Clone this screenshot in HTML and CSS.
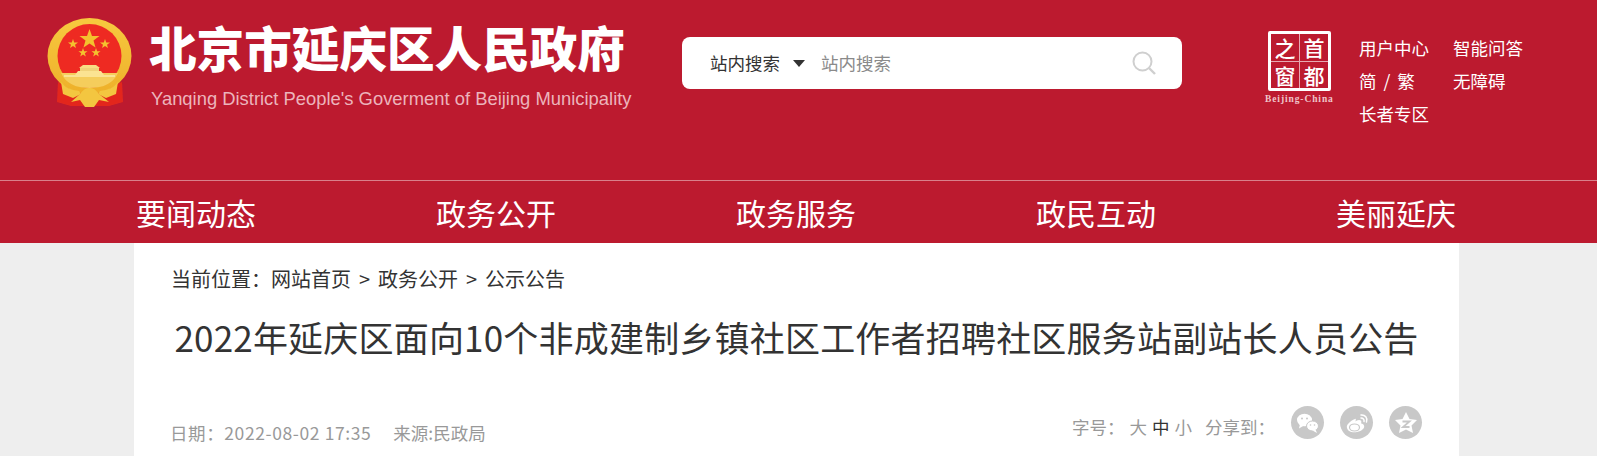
FILE: index.html
```html
<!DOCTYPE html>
<html lang="zh-CN">
<head>
  <meta charset="UTF-8" />
  <title>2022年延庆区面向10个非成建制乡镇社区工作者招聘社区服务站副站长人员公告</title>
  <link rel="stylesheet" href="styles.css">
</head>
<body>
  <header class="top">
    <svg class="emblem" viewBox="0 0 86 90" width="86" height="90">
      <defs>
        <linearGradient id="ring" x1="0" y1="0" x2="0" y2="1">
          <stop offset="0" stop-color="#f7c93f"/>
          <stop offset="1" stop-color="#eeb02a"/>
        </linearGradient>
        <filter id="soft"><feGaussianBlur stdDeviation=".35"/></filter>
      </defs>
      <g filter="url(#soft)">
        <path d="M11 64 L10 84 L24 88 L62 88 L76 84 L75 64 L43 78 Z" fill="#e3281d"/>
        <ellipse cx="42.500" cy="38" rx="42" ry="38" fill="url(#ring)"/>
        <circle cx="42.500" cy="38" r="32" fill="#ee2c24"/>
        <path d="M14 55 H71 Q64 70 42.500 70 Q21 70 14 55 Z" fill="#f5cd5c"/>
        <rect x="17" y="57" width="51" height="2" fill="#fbe392"/>
        <path d="M28 57 L31 53 H54 L57 57 Z" fill="#fbe392"/>
        <rect x="33" y="50" width="19" height="3" fill="#f0d27a"/>
        <path d="M32 50 L36 47 H49 L53 50 Z" fill="#f9dd83"/>
        <path d="M24 84 L33 76 Q38 69 42.500 70 Q47 69 52 76 L62 84 L52 82 L47 89 H38 L33 82 Z" fill="#f3c640"/>
        <path d="M14 64 Q20 72 32 73 L34 76 L26 80 L16 76 Z M71 64 Q65 72 53 73 L51 76 L59 80 L69 76 Z" fill="#f3c640"/>
        <polygon points="42.500,11 45,18 52.500,18 46.500,22.500 48.500,29.500 42.500,25.500 36.500,29.500 38.500,22.500 32.500,18 40,18" fill="#f4c22f"/>
        <polygon points="26,21 27.200,24.500 31,24.500 28,26.800 29,30 26,28 23,30 24,26.800 21,24.500 24.800,24.500" fill="#f4c22f"/>
        <polygon points="58,21 59.200,24.500 63,24.500 60,26.800 61,30 58,28 55,30 56,26.800 53,24.500 56.800,24.500" fill="#f4c22f"/>
        <polygon points="36,30 37.100,33.300 40.500,33.300 37.800,35.300 38.800,38.500 36,36.600 33.200,38.500 34.200,35.300 31.500,33.300 34.900,33.300" fill="#f4c22f"/>
        <polygon points="49,30 50.100,33.300 53.500,33.300 50.800,35.300 51.800,38.500 49,36.600 46.200,38.500 47.200,35.300 44.500,33.300 47.900,33.300" fill="#f4c22f"/>
      </g>
    </svg>
    <div class="brand">
      <div class="brand-cn">北京市延庆区人民政府</div>
      <div class="brand-en">Yanqing District People's Goverment of Beijing Municipality</div>
    </div>
    <div class="search">
      <span class="search-type">站内搜索</span>
      <i class="caret"></i>
      <span class="search-hint">站内搜索</span>
      <svg class="search-icon" viewBox="0 0 24 24" width="24" height="24">
        <circle cx="10.500" cy="10.500" r="9" fill="none" stroke="#cfcfcf" stroke-width="2"/>
        <path d="M17 17 L23 23" stroke="#cfcfcf" stroke-width="2.400"/>
      </svg>
    </div>
    <div class="capital">
      <div class="seal">
        <span>之</span><span>首</span><span>窗</span><span>都</span>
      </div>
      <div class="seal-en">Beijing-China</div>
    </div>
    <ul class="links">
      <li>用户中心</li>
      <li>智能问答</li>
      <li class="lang">简 / 繁</li>
      <li>无障碍</li>
      <li>长者专区</li>
    </ul>
  </header>

  <nav class="nav">
    <a href="#">要闻动态</a>
    <a href="#">政务公开</a>
    <a href="#">政务服务</a>
    <a href="#">政民互动</a>
    <a href="#">美丽延庆</a>
  </nav>

  <main class="article">
    <div class="crumbs">当前位置：网站首页 &gt; 政务公开 &gt; 公示公告</div>
    <h1 class="title">2022年延庆区面向10个非成建制乡镇社区工作者招聘社区服务站副站长人员公告</h1>
    <div class="meta">
      <div class="meta-left">
        <span class="date">日期：2022-08-02 17:35</span>
        <span>来源:民政局</span>
      </div>
      <div class="meta-right">
        <span class="sizes">字号：</span>
        <span class="size">大</span><span class="size current">中</span><span class="size">小</span>
        <span class="share">分享到：</span>
        <span class="circle">
          <svg viewBox="0 0 32 32" width="32" height="32">
            <ellipse cx="12.500" cy="13" rx="7.500" ry="6.300" fill="#fff"/>
            <path d="M8 17 L7 21.500 L12 18.500 Z" fill="#fff"/>
            <ellipse cx="20.500" cy="19" rx="6" ry="5" fill="#fff" stroke="#c8c8c8"/>
            <path d="M23.500 22.500 L25 26 L20.500 23.500 Z" fill="#fff"/>
            <circle cx="10" cy="11.500" r="1" fill="#c8c8c8"/><circle cx="15" cy="11.500" r="1" fill="#c8c8c8"/>
            <circle cx="18.500" cy="18" r=".8" fill="#c8c8c8"/><circle cx="22.500" cy="18" r=".8" fill="#c8c8c8"/>
          </svg>
        </span>
        <span class="circle">
          <svg viewBox="0 0 32 32" width="32" height="32">
            <path d="M14 12 C9 14 5 18 6 21 C7 25 12 26 16 25 C21 24 24 21 23 18.500 C22.500 17 21 16.500 20 16.500 C21 14 20 13 18 13 C16.500 13 15 14 14.500 14.500 C15 12.500 15 11.500 14 12 Z" fill="#fff"/>
            <ellipse cx="13.500" cy="20.500" rx="5" ry="3.500" fill="none" stroke="#c8c8c8" stroke-width="1.200"/>
            <path d="M20 8 C24 7.500 27 11 25.500 15 M20 11 C22 11 23.500 12.500 23 14.500" fill="none" stroke="#fff" stroke-width="1.500" stroke-linecap="round"/>
          </svg>
        </span>
        <span class="circle">
          <svg viewBox="0 0 32 32" width="32" height="32">
            <polygon points="16,5 19.500,12 27,13 21.500,18.500 23,26 16,22.500 9,26 10.500,18.500 5,13 12.500,12" fill="#fff"/>
            <path d="M12.500 14.500 H19.500 L13 20 H19.500" fill="none" stroke="#c8c8c8" stroke-width="1.800"/>
          </svg>
        </span>
      </div>
    </div>
  </main>
</body>
</html>
```

FILE: styles.css
```css
* {
  box-sizing: border-box;
}

html, body {
  height: 456px;
  overflow: hidden;
}

body {
  margin: 0;
  font-family: "Noto Sans CJK SC", "Liberation Sans", sans-serif;
  background-color: #eeeeee;
}

.top {
  height: 180px;
  background-color: #bc1a2f;
  color: white;
  display: flex;
  align-items: flex-start;
  padding-left: 47px;
}

.emblem {
  margin-top: 18px;
}

.brand {
  margin-left: 16px;
  width: 533px;
}

.brand-cn {
  margin-top: 17px;
  font-size: 47.600px;
  line-height: 60px;
  font-weight: 900;
  white-space: nowrap;
}

.brand-en {
  margin-top: 12px;
  padding-left: 2px;
  font-family: "Liberation Sans", sans-serif;
  font-size: 18.400px;
  line-height: 20px;
  color: #ecb4bc;
  white-space: nowrap;
}

.search {
  margin-top: 37px;
  width: 500px;
  height: 52px;
  background: white;
  border-radius: 8px;
  display: flex;
  align-items: center;
  padding: 0 26px 0 28px;
  font-size: 17.500px;
}

.search-type {
  color: #333;
  padding-bottom: 2px;
}

.caret {
  margin-left: 13px;
  border-top: 7px solid #333;
  border-left: 6px solid transparent;
  border-right: 6px solid transparent;
}

.search-hint {
  margin-left: 16px;
  padding-bottom: 2px;
  color: #8a8a8a;
  flex: 1;
}

.capital {
  margin-left: 86px;
  margin-top: 31px;
  width: 63px;
}

.seal {
  width: 63px;
  height: 60px;
  border: 3px solid white;
  border-radius: 2px;
  display: grid;
  grid-template-columns: 1fr 1fr;
  grid-template-rows: 1fr 1fr;
  gap: 1px;
  background: #e7a9b1;
  font-size: 21px;
  line-height: 26px;
  font-weight: 500;
  text-align: center;
}

.seal span {
  background: #bc1a2f;
}

.seal-en {
  margin-top: 3px;
  margin-left: -3px;
  width: 70px;
  font-family: "Liberation Serif", serif;
  font-size: 9.500px;
  line-height: 11px;
  font-weight: 700;
  letter-spacing: .9px;
  color: #efc5ca;
  white-space: nowrap;
}

.links {
  list-style: none;
  margin: 31px 0 0 28px;
  padding: 0;
  display: grid;
  grid-template-columns: 94px 94px;
  grid-auto-rows: 33px;
  font-size: 17.500px;
  line-height: 33px;
}

.lang {
  word-spacing: 3px;
}

.nav {
  height: 63px;
  background-color: #bc1a2f;
  border-top: 1px solid #d9808b;
  display: flex;
  padding-left: 46px;
}

.nav a {
  width: 300px;
  text-align: center;
  color: white;
  text-decoration: none;
  font-size: 30px;
  line-height: 62px;
}

.article {
  width: 1325px;
  height: 213px;
  margin-left: 134px;
  background: white;
  padding: 0 36px;
}

.crumbs {
  padding-top: 21px;
  padding-left: 1px;
  font-size: 20px;
  line-height: 30px;
  word-spacing: 3.500px;
  color: #333;
}

.title {
  margin: 17px 0 0;
  font-size: 35px;
  line-height: 52px;
  font-weight: 400;
  letter-spacing: .2px;
  color: #333;
  text-align: center;
  white-space: nowrap;
}

.meta {
  margin-top: 47px;
  display: flex;
  justify-content: space-between;
  align-items: flex-start;
  font-size: 17.500px;
  line-height: 34px;
  color: #999;
}

.meta-left {
  padding-top: 6px;
}

.date {
  letter-spacing: .6px;
}

.meta-left span + span {
  margin-left: 18px;
}

.meta-right {
  display: flex;
  align-items: flex-start;
  padding-right: 1px;
}

.size {
  margin-left: 5px;
}

.size.current {
  color: #333;
}

.share {
  margin-left: 13px;
  margin-right: 0;
}

.circle {
  width: 33px;
  height: 33px;
  margin-top: -4px;
  margin-left: 16px;
  border-radius: 50%;
  background: #c8c8c8;
  display: flex;
  align-items: center;
  justify-content: center;
}
```
